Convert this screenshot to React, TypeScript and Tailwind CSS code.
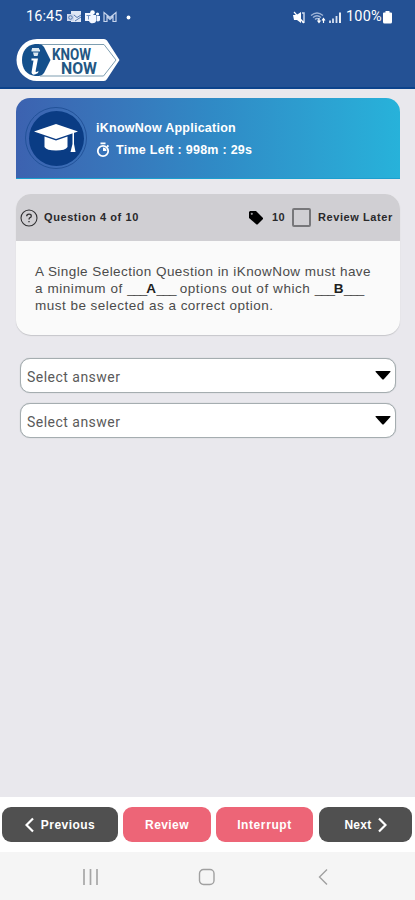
import type { ReactNode } from "react";

const SANS = "font-['Liberation_Sans',Arial,sans-serif]";

function StatusBar() {
  return (
    <div className="flex h-8 items-center justify-between pl-[26px] pr-[23px] pt-[2px] font-[Roboto,sans-serif] text-white">
      <div className="flex items-center">
        <span className="w-[37px] whitespace-nowrap text-[14.5px] tracking-[0.1px]">16:45</span>
        <svg className="ml-[4px]" width="70" height="14" viewBox="0 0 70 14" fill="none">
          {/* outlook */}
          <path d="M4 1h10v11H4z" fill="#dfe7f5" />
          <path d="M0 4h7v7H0z" fill="#cbd7ec" />
          <circle cx="3.5" cy="7.5" r="1.8" stroke="#5578b0" />
          <path d="M7 5l3 2.5L14 5M8 11l6-4" stroke="#5578b0" />
          {/* teams */}
          <circle cx="25.500" cy="2.500" r="2.300" fill="#fff" />
          <circle cx="30.500" cy="4" r="1.600" fill="#fff" />
          <path d="M18 3h8v8h-8zM22 5h7v6c0 2.500-6 3.500-7 0zM29.500 6H33v4c0 1-2 2-3.500 1z" fill="#f4f7ff" />
          <path d="M19.500 5.500h4M21.500 5.500v4" stroke="#7796c4" />
          {/* gmail */}
          <path d="M37 11.500v-9l6 5 6-5v9h-3v-5l-3 3-3-3v5z" stroke="#c6d4ec" strokeWidth="1.200" />
          <circle cx="61.500" cy="7.500" r="1.900" fill="#fff" />
        </svg>
      </div>
      <div className="flex items-center">
        <svg width="50" height="15" viewBox="0 0 50 15" fill="none">
          {/* muted speaker */}
          <path d="M0 5h3.500L8 2v11l-4-3H1z" fill="#fff" />
          <path d="M9 3h2v9H9" stroke="#c8d5ea" strokeWidth="1.500" />
          <path d="M1 2l10 11" stroke="#fff" strokeWidth="1.200" />
          {/* wifi */}
          <path d="M18 5.500q6-5 12 0M20 7.500q4-3.500 8 0M22 9.500q2-2 4 0" stroke="#9eb4d7" strokeWidth="1.300" />
          <path d="M26 8v4M24.500 10.500L26 12.500l1.500-2M30.500 13V9M29 10.500L30.500 8.500l1.500 2" stroke="#fff" strokeWidth="1.200" />
          {/* signal */}
          <path d="M37 13v-2.500M40 13V8.500M43.500 13V6" stroke="#d8e2f2" strokeWidth="1.800" />
          <path d="M47 13V2.500" stroke="#fff" strokeWidth="1.800" />
        </svg>
        <span className="ml-[3px] w-[37px] whitespace-nowrap text-[14.5px] tracking-[0.2px]">100%</span>
        <svg width="9" height="14" viewBox="0 0 9 14" fill="#fff">
          <path d="M2.500 1h4v1.500H8A1 1 0 0 1 9 3.500V12a1.500 1.500 0 0 1-1.500 1.500h-6A1.500 1.500 0 0 1 0 12V3.500a1 1 0 0 1 1-1h1.500z" />
        </svg>
      </div>
    </div>
  );
}

function Logo() {
  return (
    <svg className="ml-[16px] mt-[6px] block" width="104" height="44" viewBox="0 0 104 44">
      <path d="M21 1h67a4 4 0 0 1 3 1.500L103.500 22 91 41a4 4 0 0 1-3 2H21A20.500 21 0 0 1 21 1z" fill="#fff" />
      <path d="M24 6.500h64L100 22 87.500 38H24" fill="none" stroke="#7e9eb1" strokeWidth="1" />
      <path d="M19 6h4q3 0 5 3l6.500 13L28 35q-2 3-5 3h-4C10 37 6 30 6 22S10 7 19 6z" fill="#14508c" />
      <path d="M16 10h7v1.500h1v2h-8.500v-2h.5zM17 14.500h5.500l-1 3.500h-3.500z" fill="#dce9f2" />
      <path d="M15.500 20.500H22l-2.500 13q.5 1 3-.5l-.5 2q-6 3.500-6.500-.5l2-12h-2z" fill="#fff" />
      <text x="36" y="21.500" textLength="39" lengthAdjust="spacingAndGlyphs" fill="#235783" fontFamily="Roboto, sans-serif" fontWeight="700" fontSize="16">
        KNOW
      </text>
      <text x="45" y="36" textLength="36" lengthAdjust="spacingAndGlyphs" fill="#235783" fontFamily="Roboto, sans-serif" fontWeight="700" fontSize="17">
        NOW
      </text>
    </svg>
  );
}

function ExamBanner() {
  return (
    <div className="mx-[16px] mt-[9px] flex h-[81px] w-[384px] items-center rounded-t-[14px] border-b border-[#1c9fcf] bg-linear-to-r from-[#3c62b0] via-[#3089c5] to-[#27b2da] text-white">
      <div className="ml-[9px] flex size-[62px] items-center justify-center rounded-full border border-[#225299]">
        <div className="flex size-[55px] items-center justify-center rounded-full bg-[#0a3c84]">
          <svg width="46" height="30" viewBox="0 0 46 30" fill="#fff">
            <path d="M23 1L45 8.500 23 16 1 8.500z" />
            <path d="M11.500 13.500L23 17.500l11.500-4V24q-2 3.500-11.500 3.500T11.500 24z" />
            <path d="M39.500 9h1.500v12l1.500 8h-5l2-8z" />
          </svg>
        </div>
      </div>
      <div className={`ml-[9px] pt-[2px] ${SANS} font-bold`}>
        <p className="h-[22px] whitespace-nowrap text-[12.5px] leading-[20px] tracking-[0.25px]">iKnowNow Application</p>
        <div className="flex h-[20px] items-center">
          <svg width="14" height="16" viewBox="0 0 14 16" fill="none" stroke="#fff">
            <circle cx="7" cy="9" r="5.200" strokeWidth="1.800" />
            <path d="M4.500 1.300h5M11 3.500l1.500 1.300" strokeWidth="1.800" />
            <path d="M7 9V5.500A3.500 3.500 0 0 1 10.500 9z" fill="#fff" stroke="none" />
          </svg>
          <span className="ml-[6px] whitespace-nowrap text-[12.5px] leading-[20px] tracking-[0.27px]">Time Left : 998m : 29s</span>
        </div>
      </div>
    </div>
  );
}

function QuestionCard() {
  return (
    <div className={`mx-[16px] mt-[15px] h-[141px] w-[384px] overflow-hidden rounded-[15px] bg-[#fafafa] shadow-[0_1px_1px_#c6c6ca] ${SANS}`}>
      <div className="flex h-[47px] items-center bg-[#d0cfd3] pl-[4px] text-[11px] font-bold text-[#29292b]">
        <svg width="18" height="18" viewBox="0 0 18 18" fill="none" stroke="#303032">
          <circle cx="9" cy="9" r="8" strokeWidth="1.100" />
          <path d="M6.700 7.300q0-2.200 2.300-2.200t2.300 1.800q0 1.300-1.300 1.800-1 .4-1 1.800M9 12v1.200" strokeWidth="1.300" />
        </svg>
        <span className="ml-[6px] w-[100px] whitespace-nowrap tracking-[0.58px]">Question 4 of 10</span>
        <svg className="ml-[104px]" width="16" height="16" viewBox="0 0 16 16">
          <path d="M1 2l1-1h6l7 7v1l-5.500 5.500h-1L1 8z" fill="#000" />
          <circle cx="3.800" cy="3.800" r="1.100" fill="#99999c" />
        </svg>
        <span className="ml-[8px] w-[13px] tracking-[0.4px]">10</span>
        <span className="ml-[7px] size-[19px] rounded-[2px] border-2 border-[#77777a]" />
        <span className="ml-[7px] whitespace-nowrap tracking-[0.58px]">Review Later</span>
      </div>
      <div className="pl-[19px] pt-[22px] text-[13.5px] leading-[17px] text-[#4b4b4b]">
        <p className="whitespace-nowrap tracking-[0.44px]">A Single Selection Question in iKnowNow must have</p>
        <p className="whitespace-nowrap tracking-[0.57px]">
          a minimum of <span className="tracking-[-1.2px]">___</span><b className="text-[#202020]">A</b><span className="tracking-[-1.2px]">___</span> options out of which <span className="tracking-[-1.2px]">___</span><b className="text-[#202020]">B</b><span className="tracking-[-1.2px]">___</span>
        </p>
        <p className="whitespace-nowrap tracking-[0.48px]">must be selected as a correct option.</p>
      </div>
    </div>
  );
}

function AnswerSelect() {
  return (
    <button className="flex h-[35px] w-[376px] items-center justify-between rounded-[10px] border border-[#a5adb0] bg-white pl-[6px] pr-[4px] shadow-[0_0_1px_#a5adb0]">
      <span className="pt-[3px] font-[Roboto,sans-serif] text-[14px] tracking-[0.48px] text-[#5a5a5a]">Select answer</span>
      <svg width="16" height="9" viewBox="0 0 16 9">
        <path d="M1 0h14q1 0 .3 1L9 8q-1 1-2 0L.7 1Q0 0 1 0z" fill="#000" />
      </svg>
    </button>
  );
}

function FooterButton({ className, children }: { className: string; children: ReactNode }) {
  return (
    <button className={`flex h-[35px] items-center justify-center whitespace-nowrap rounded-[9px] ${SANS} text-[12px] font-bold text-white ${className}`}>
      {children}
    </button>
  );
}

export default function App() {
  return (
    <div className="flex h-[900px] w-[415px] flex-col overflow-hidden bg-[#e9e8ed]">
      <header className="h-[89px] shrink-0 border-b-2 border-[#0c438c] bg-[#245194]">
        <StatusBar />
        <Logo />
      </header>

      <main className="flex-1">
        <ExamBanner />
        <QuestionCard />
        <div className="mt-[23px] flex flex-col gap-[10px] pl-[20px]">
          <AnswerSelect />
          <AnswerSelect />
        </div>
      </main>

      <footer className="flex h-[55px] shrink-0 items-center bg-white pl-[2px]">
        <FooterButton className="w-[116px] bg-[#505050] tracking-[0.45px]">
          <svg className="mr-[7px]" width="9" height="16" viewBox="0 0 9 16" fill="none" stroke="#fff" strokeWidth="2.200">
            <path d="M8 1.500L1.500 8 8 14.500" />
          </svg>
          Previous
        </FooterButton>
        <FooterButton className="ml-[5px] w-[88px] bg-[#ed6577] tracking-[0.4px]">Review</FooterButton>
        <FooterButton className="ml-[5px] w-[97px] bg-[#ed6577] tracking-[0.6px]">Interrupt</FooterButton>
        <FooterButton className="ml-[6px] w-[93px] bg-[#505050] tracking-[0.3px]">
          Next
          <svg className="ml-[6px]" width="9" height="16" viewBox="0 0 9 16" fill="none" stroke="#fff" strokeWidth="2.200">
            <path d="M1 1.500L7.500 8 1 14.500" />
          </svg>
        </FooterButton>
      </footer>

      <nav className="flex h-[48px] shrink-0 items-center bg-[#f5f5f5] pl-[82px] pt-[2px]">
        <svg width="17" height="16" viewBox="0 0 17 16" stroke="#a6a6a6" strokeWidth="1.700">
          <path d="M2 0v16M8.500 0v16M15 0v16" />
        </svg>
        <svg className="ml-[99px]" width="18" height="18" viewBox="0 0 18 18" fill="none" stroke="#a0a0a0" strokeWidth="1.400">
          <rect x="1.500" y="1.500" width="14.500" height="15" rx="4" />
        </svg>
        <svg className="ml-[102px]" width="10" height="18" viewBox="0 0 10 18" fill="none" stroke="#a0a0a0" strokeWidth="1.400">
          <path d="M9 1.500L1.500 9 9 16.500" />
        </svg>
      </nav>
    </div>
  );
}
